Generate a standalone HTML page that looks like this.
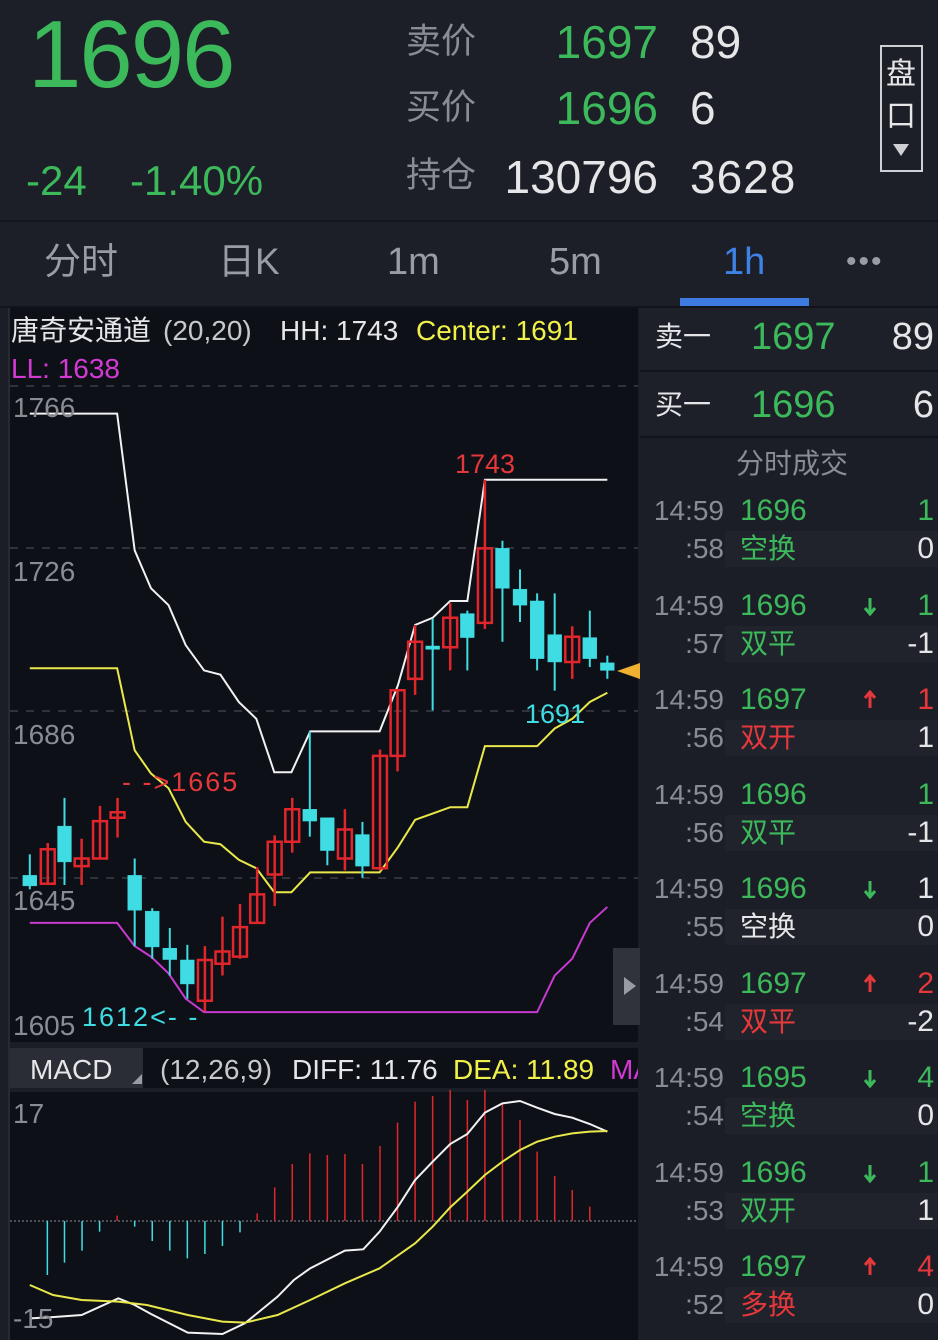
<!DOCTYPE html>
<html><head><meta charset="utf-8"><style>
*{margin:0;padding:0;box-sizing:border-box}
body{width:938px;height:1340px;background:#1b1e27;position:relative;overflow:hidden;font-family:"Liberation Sans","Noto Sans CJK SC",sans-serif;color:#e6e6e8}
.a{position:absolute;white-space:nowrap}
.g{color:#3cb95a}.r{color:#e5383b}.c{color:#3fdde3}.gr{color:#8a8c94}.w{color:#e6e6e8}.y{color:#f0f04a}.m{color:#d33ad3}
.rt{text-align:right}
</style></head><body>
<!-- header -->
<div class="a" style="left:0;top:0;width:938px;height:220px;background:#1c1f28"></div>
<div class="a g" style="left:28px;top:0;font-size:96px;line-height:110px;letter-spacing:-2px">1696</div>
<div class="a g" style="left:26px;top:158px;font-size:42px;line-height:46px">-24</div>
<div class="a g" style="left:130px;top:158px;font-size:42px;line-height:46px">-1.40%</div>
<div class="a gr" style="left:406px;top:22px;font-size:35px;line-height:40px">卖价</div>
<div class="a gr" style="left:406px;top:88px;font-size:35px;line-height:40px">买价</div>
<div class="a gr" style="left:406px;top:156px;font-size:35px;line-height:40px">持仓</div>
<div class="a g rt" style="left:500px;width:158px;top:17px;font-size:46px;line-height:50px">1697</div>
<div class="a g rt" style="left:500px;width:158px;top:83px;font-size:46px;line-height:50px">1696</div>
<div class="a w rt" style="left:470px;width:188px;top:152px;font-size:46px;line-height:50px">130796</div>
<div class="a w" style="left:690px;top:17px;font-size:46px;line-height:50px">89</div>
<div class="a w" style="left:690px;top:83px;font-size:46px;line-height:50px">6</div>
<div class="a w" style="left:690px;top:152px;font-size:46px;line-height:50px;letter-spacing:1px">3628</div>
<div class="a" style="left:880px;top:45px;width:43px;height:127px;border:2px solid #cfd0d4"></div>
<div class="a w" style="left:886px;top:58px;font-size:30px;line-height:34px">盘</div>
<div class="a w" style="left:886px;top:100px;font-size:30px;line-height:34px">口</div>
<div class="a" style="left:893px;top:144px;width:0;height:0;border-left:8px solid transparent;border-right:8px solid transparent;border-top:12px solid #cfd0d4"></div>
<div class="a" style="left:0;top:220px;width:938px;height:2px;background:#14161d"></div>
<!-- tabs -->
<div class="a" style="left:0;top:222px;width:938px;height:84px;background:#1c1f28"></div>
<div class="a gr" style="left:44px;top:240px;font-size:37px;line-height:44px;color:#9a9ca3">分时</div>
<div class="a gr" style="left:218px;top:240px;font-size:37px;line-height:44px;color:#9a9ca3">日K</div>
<div class="a gr" style="left:387px;top:240px;font-size:38px;line-height:44px;color:#9a9ca3">1m</div>
<div class="a gr" style="left:549px;top:240px;font-size:38px;line-height:44px;color:#9a9ca3">5m</div>
<div class="a" style="left:723px;top:240px;font-size:38px;line-height:44px;color:#3d82e6">1h</div>
<div class="a" style="left:846px;top:240px;font-size:30px;line-height:44px;color:#9a9ca3;letter-spacing:2px">•••</div>
<div class="a" style="left:680px;top:298px;width:129px;height:8px;background:#3d7be0"></div>
<div class="a" style="left:0;top:306px;width:938px;height:2px;background:#12141b"></div>
<!-- chart bg -->
<div class="a" style="left:10px;top:308px;width:628px;height:1032px;background:#0e1018"></div>
<div class="a" style="left:8px;top:308px;width:2px;height:1032px;background:#262a33"></div>
<div class="a" style="left:10px;top:1042px;width:628px;height:6px;background:#1b1e27"></div>
<div class="a" style="left:10px;top:1048px;width:133px;height:40px;background:#2a2d36"></div>
<div class="a" style="left:10px;top:1088px;width:628px;height:4px;background:#1b1e27"></div>
<div class="a" style="left:132px;top:1074px;width:0;height:0;border-left:10px solid transparent;border-bottom:10px solid #9a9ca3"></div>

<svg class="a" style="left:0;top:0" width="938" height="1340">
 <g stroke="#3a3d47" stroke-width="1.5" stroke-dasharray="8 8">
  <line x1="10" y1="386" x2="638" y2="386"/>
  <line x1="10" y1="548" x2="638" y2="548"/>
  <line x1="10" y1="711" x2="638" y2="711"/>
  <line x1="10" y1="878" x2="638" y2="878"/>
 </g>
 <g transform="translate(0,380) scale(0.40816,0.42088)" fill="none">
  <polyline vector-effect="non-scaling-stroke" stroke="#f2f2f2" stroke-width="2" points="73,80 287,80 330,405 370,495 413,535 455,630 500,690 540,700 585,765 628,805 672,932 714,932 760,835 930,835 975,725 1017,582 1060,565 1103,525 1145,525 1188,237 1488,237"/>
  <polyline vector-effect="non-scaling-stroke" stroke="#e8e84a" stroke-width="2" points="73,685 287,685 330,880 370,935 413,970 455,1050 500,1097 540,1103 585,1140 628,1160 672,1217 714,1217 760,1170 930,1170 975,1110 1017,1045 1060,1030 1103,1015 1145,1015 1188,870 1316,870 1359,828 1402,805 1445,765 1488,743"/>
  <polyline vector-effect="non-scaling-stroke" stroke="#c83ad0" stroke-width="2" points="73,1290 287,1290 330,1345 370,1370 413,1410 455,1470 500,1502 1316,1502 1359,1415 1402,1375 1445,1290 1488,1252"/>
  <g stroke="#3fdde3" fill="#3fdde3">
   <line vector-effect="non-scaling-stroke" stroke-width="2" x1="73" y1="1127" x2="73" y2="1210"/><rect x="56" y="1177" width="34" height="25"/>
   <line vector-effect="non-scaling-stroke" stroke-width="2" x1="158" y1="993" x2="158" y2="1200"/><rect x="141" y="1060" width="34" height="85"/>
   <line vector-effect="non-scaling-stroke" stroke-width="2" x1="330" y1="1137" x2="330" y2="1345"/><rect x="313" y="1177" width="34" height="83"/>
   <line vector-effect="non-scaling-stroke" stroke-width="2" x1="373" y1="1255" x2="373" y2="1375"/><rect x="356" y="1262" width="34" height="85"/>
   <line vector-effect="non-scaling-stroke" stroke-width="2" x1="416" y1="1302" x2="416" y2="1415"/><rect x="399" y="1350" width="34" height="27"/>
   <line vector-effect="non-scaling-stroke" stroke-width="2" x1="459" y1="1342" x2="459" y2="1470"/><rect x="442" y="1378" width="34" height="57"/>
   <line vector-effect="non-scaling-stroke" stroke-width="2" x1="759" y1="835" x2="759" y2="1085"/><rect x="742" y="1020" width="34" height="28"/>
   <line vector-effect="non-scaling-stroke" stroke-width="2" x1="802" y1="1040" x2="802" y2="1153"/><rect x="785" y="1040" width="34" height="78"/>
   <line vector-effect="non-scaling-stroke" stroke-width="2" x1="888" y1="1050" x2="888" y2="1183"/><rect x="871" y="1080" width="34" height="75"/>
   <line vector-effect="non-scaling-stroke" stroke-width="2" x1="1060" y1="567" x2="1060" y2="785"/><rect x="1043" y="632" width="34" height="8"/>
   <line vector-effect="non-scaling-stroke" stroke-width="2" x1="1145" y1="548" x2="1145" y2="690"/><rect x="1128" y="555" width="34" height="57"/>
   <line vector-effect="non-scaling-stroke" stroke-width="2" x1="1231" y1="382" x2="1231" y2="622"/><rect x="1214" y="400" width="34" height="95"/>
   <line vector-effect="non-scaling-stroke" stroke-width="2" x1="1274" y1="450" x2="1274" y2="575"/><rect x="1257" y="497" width="34" height="38"/>
   <line vector-effect="non-scaling-stroke" stroke-width="2" x1="1316" y1="507" x2="1316" y2="690"/><rect x="1299" y="525" width="34" height="137"/>
   <line vector-effect="non-scaling-stroke" stroke-width="2" x1="1359" y1="507" x2="1359" y2="738"/><rect x="1342" y="605" width="34" height="65"/>
   <line vector-effect="non-scaling-stroke" stroke-width="2" x1="1445" y1="548" x2="1445" y2="682"/><rect x="1428" y="612" width="34" height="50"/>
   <line vector-effect="non-scaling-stroke" stroke-width="2" x1="1488" y1="655" x2="1488" y2="710"/><rect x="1471" y="672" width="34" height="18"/>
  </g>
  <g stroke="#e0262a" fill="none" stroke-width="2.5">
   <path vector-effect="non-scaling-stroke" d="M117 1100V1200M100 1115h34v82h-34z"/>
   <path vector-effect="non-scaling-stroke" d="M200 1090V1200M183 1137h34v18h-34z"/>
   <path vector-effect="non-scaling-stroke" d="M245 1012V1140M228 1048h34v89h-34z"/>
   <path vector-effect="non-scaling-stroke" d="M288 993V1087M271 1027h34v13h-34z"/>
   <path vector-effect="non-scaling-stroke" d="M502 1345V1500M485 1378h34v97h-34z"/>
   <path vector-effect="non-scaling-stroke" d="M545 1275V1415M528 1358h34v29h-34z"/>
   <path vector-effect="non-scaling-stroke" d="M588 1245V1375M571 1300h34v70h-34z"/>
   <path vector-effect="non-scaling-stroke" d="M630 1157V1290M613 1222h34v68h-34z"/>
   <path vector-effect="non-scaling-stroke" d="M673 1082V1250M656 1097h34v78h-34z"/>
   <path vector-effect="non-scaling-stroke" d="M716 993V1123M699 1020h34v77h-34z"/>
   <path vector-effect="non-scaling-stroke" d="M845 1020V1165M828 1068h34v69h-34z"/>
   <path vector-effect="non-scaling-stroke" d="M931 878V1165M914 893h34v267h-34z"/>
   <path vector-effect="non-scaling-stroke" d="M974 735V930M957 737h34v156h-34z"/>
   <path vector-effect="non-scaling-stroke" d="M1017 582V748M1000 622h34v88h-34z"/>
   <path vector-effect="non-scaling-stroke" d="M1103 530V690M1086 565h34v70h-34z"/>
   <path vector-effect="non-scaling-stroke" d="M1188 237V592M1171 400h34v177h-34z"/>
   <path vector-effect="non-scaling-stroke" d="M1402 585V710M1385 610h34v60h-34z"/>
  </g>
 </g>
 <polygon points="617,671 640,663 640,679" fill="#f0b030"/>
 <rect x="613" y="948" width="27" height="77" fill="#30333c"/>
 <polygon points="624,977 636,986 624,995" fill="#9a9ca3"/>
 <!-- MACD -->
 <line x1="10" y1="1221" x2="638" y2="1221" stroke="#8a8c94" stroke-width="1" stroke-dasharray="2 2"/>
 <g transform="translate(0,1040) scale(0.40816,0.33333)" fill="none">
  <g stroke="#3fdde3" stroke-width="1.5">
   <path vector-effect="non-scaling-stroke" d="M116 543V705M158 543V668M201 543V632M244 543V575M330 543V560M373 543V603M416 543V632M459 543V655M502 543V642M545 543V618M588 543V577"/>
  </g>
  <g stroke="#e0262a" stroke-width="1.5">
   <path vector-effect="non-scaling-stroke" d="M287 543V527M630 543V520M673 543V442M716 543V372M759 543V340M802 543V345M845 543V342M888 543V372M931 543V318M974 543V248M1017 543V185M1060 543V168M1103 543V150M1145 543V180M1188 543V150M1231 543V190M1274 543V240M1316 543V335M1359 543V408M1402 543V450M1445 543V500"/>
  </g>
  <polyline vector-effect="non-scaling-stroke" stroke="#f2f2f2" stroke-width="2" points="73,835 120,832 200,825 290,775 330,795 370,822 460,878 545,882 600,850 680,770 720,720 760,685 800,660 845,632 890,628 930,575 975,500 1017,420 1060,365 1103,312 1145,282 1188,218 1231,190 1274,183 1316,203 1359,222 1402,233 1445,252 1488,275"/>
  <polyline vector-effect="non-scaling-stroke" stroke="#e8e84a" stroke-width="2" points="73,735 130,765 200,780 290,785 360,795 460,825 545,845 600,848 680,825 760,780 845,730 930,685 1017,610 1060,560 1103,502 1145,455 1188,405 1231,365 1274,330 1316,305 1359,290 1402,280 1445,275 1488,273"/>
 </g>
</svg>

<!-- chart texts -->
<div class="a w" style="left:11px;top:314px;font-size:28px;line-height:34px">唐奇安通道</div>
<div class="a" style="left:163px;top:314px;font-size:28px;line-height:34px;color:#c8c9cc">(20,20)</div>
<div class="a w" style="left:280px;top:314px;font-size:28px;line-height:34px">HH: 1743</div>
<div class="a y" style="left:416px;top:314px;font-size:28px;line-height:34px">Center: 1691</div>
<div class="a m" style="left:11px;top:353px;font-size:28px;line-height:32px">LL: 1638</div>
<div class="a gr" style="left:13px;top:393px;font-size:28px;line-height:30px">1766</div>
<div class="a gr" style="left:13px;top:557px;font-size:28px;line-height:30px">1726</div>
<div class="a gr" style="left:13px;top:720px;font-size:28px;line-height:30px">1686</div>
<div class="a gr" style="left:13px;top:886px;font-size:28px;line-height:30px">1645</div>
<div class="a gr" style="left:13px;top:1011px;font-size:28px;line-height:30px">1605</div>
<div class="a r" style="left:455px;top:449px;font-size:27px;line-height:30px">1743</div>
<div class="a r" style="left:122px;top:767px;font-size:27px;line-height:30px;letter-spacing:2px">- -&gt;1665</div>
<div class="a c" style="left:525px;top:699px;font-size:27px;line-height:30px">1691</div>
<div class="a c" style="left:82px;top:1002px;font-size:27px;line-height:30px;letter-spacing:2px">1612&lt;- -</div>
<div class="a w" style="left:30px;top:1054px;font-size:28px;line-height:32px">MACD</div>
<div class="a" style="left:160px;top:1054px;font-size:28px;line-height:32px;color:#c8c9cc">(12,26,9)</div>
<div class="a w" style="left:292px;top:1054px;font-size:28px;line-height:32px">DIFF: 11.76</div>
<div class="a y" style="left:453px;top:1054px;font-size:28px;line-height:32px">DEA: 11.89</div>
<div class="a" style="left:610px;top:1054px;width:28px;overflow:hidden;font-size:28px;line-height:32px;color:#d33ad3">MACD</div>
<div class="a gr" style="left:13px;top:1099px;font-size:28px;line-height:30px">17</div>
<div class="a gr" style="left:13px;top:1304px;font-size:28px;line-height:30px">-15</div>

<!-- right panel -->
<div class="a" style="left:640px;top:308px;width:298px;height:62px;background:#1d2029"></div>
<div class="a" style="left:640px;top:370px;width:298px;height:2px;background:#12141b"></div>
<div class="a" style="left:640px;top:372px;width:298px;height:64px;background:#1d2029"></div>
<div class="a" style="left:640px;top:436px;width:298px;height:2px;background:#12141b"></div>
<div class="a w" style="left:655px;top:320px;font-size:28px;line-height:34px">卖一</div>
<div class="a g" style="left:751px;top:315px;font-size:38px;line-height:44px">1697</div>
<div class="a w rt" style="left:840px;width:94px;top:315px;font-size:38px;line-height:44px">89</div>
<div class="a w" style="left:655px;top:388px;font-size:28px;line-height:34px">买一</div>
<div class="a g" style="left:751px;top:383px;font-size:38px;line-height:44px">1696</div>
<div class="a w rt" style="left:840px;width:94px;top:383px;font-size:38px;line-height:44px">6</div>
<div class="a gr" style="left:736px;top:447px;font-size:28px;line-height:34px">分时成交</div>

<div id="list"></div>
<script>
var d=[["1696","","1","g",":58","空换","g","0"],["1696","d","1","g",":57","双平","g","-1"],["1697","u","1","r",":56","双开","r","1"],["1696","","1","g",":56","双平","g","-1"],["1696","d","1","w",":55","空换","w","0"],["1697","u","2","r",":54","双平","r","-2"],["1695","d","4","g",":54","空换","g","0"],["1696","d","1","g",":53","双开","g","1"],["1697","u","4","r",":52","多换","r","0"]];
var h="";
d.forEach(function(e,i){var t=511+94.5*i;
h+='<div class="a" style="left:725px;top:'+(t+20)+'px;width:213px;height:36px;background:#20232c"></div>';
h+='<div class="a gr rt" style="left:640px;width:84px;top:'+(t-17)+'px;font-size:28px;line-height:34px">14:59</div>';
h+='<div class="a g" style="left:740px;top:'+(t-18)+'px;font-size:30px;line-height:36px">'+e[0]+'</div>';
if(e[1]){var col=e[1]=="u"?"#e5383b":"#3cb95a";var p=e[1]=="u"?"M8 18V3M3 8L8 2L13 8":"M8 2V17M3 12L8 18L13 12";
h+='<svg class="a" style="left:862px;top:'+(t-10)+'px" width="16" height="20"><path d="'+p+'" stroke="'+col+'" stroke-width="3" fill="none"/></svg>';}
h+='<div class="a '+e[3]+' rt" style="left:880px;width:54px;top:'+(t-18)+'px;font-size:30px;line-height:36px">'+e[2]+'</div>';
h+='<div class="a gr rt" style="left:640px;width:84px;top:'+(t+21)+'px;font-size:28px;line-height:34px">'+e[4]+'</div>';
h+='<div class="a '+e[6]+'" style="left:740px;top:'+(t+20)+'px;font-size:28px;line-height:36px">'+e[5]+'</div>';
h+='<div class="a w rt" style="left:860px;width:74px;top:'+(t+20)+'px;font-size:30px;line-height:36px">'+e[7]+'</div>';
});
document.getElementById("list").innerHTML=h;
</script>
</body></html>
